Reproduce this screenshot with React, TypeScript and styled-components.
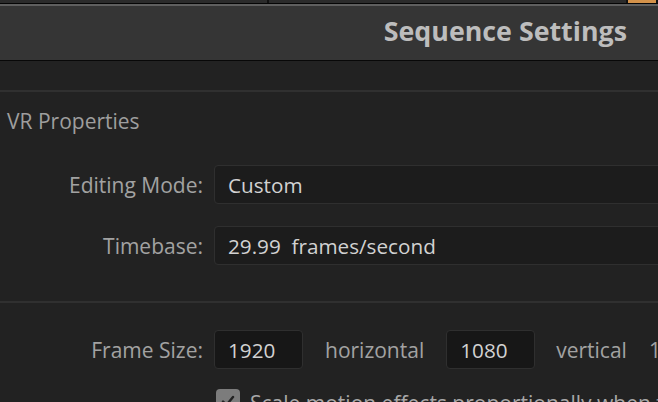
import React from "react";
import styled, { createGlobalStyle } from "styled-components";

const GlobalStyle = createGlobalStyle`
  html, body {
    margin: 0;
    padding: 0;
    background: #222222;
  }
  body {
    font-family: "Open Sans", "Noto Sans", Arial, sans-serif;
    -webkit-font-smoothing: antialiased;
  }
`;

const Screen = styled.div`
  width: 658px;
  height: 402px;
  overflow: hidden;
  display: flex;
  flex-direction: column;
  background: #222222;

  & > * {
    flex-shrink: 0;
  }
`;

const TabStrip = styled.div`
  display: flex;
  height: 3px;
  background: #2a2a2a;
  border-bottom: 1px solid #050505;
`;

const TabSegment = styled.div<{ $width?: number; $color?: string }>`
  flex: ${(p) => (p.$width ? `0 0 ${p.$width}px` : "1")};
  background: ${(p) => p.$color || "#2b2b2b"};
  border-right: 2px solid #111111;
`;

const TitleBar = styled.div`
  box-sizing: border-box;
  height: 57px;
  background: #353535;
  border-top: 2px solid #5f5f5f;
  border-bottom: 1px solid #080808;
  display: flex;
  align-items: center;
  justify-content: flex-end;
  padding: 0 31px 4px 0;
`;

const Title = styled.h1`
  margin: 0;
  font-size: 26.8px;
  line-height: 32px;
  font-weight: 700;
  color: #bdbdbd;
`;

const Body = styled.div`
  padding-top: 29px;
  display: flex;
  flex-direction: column;
`;

const Divider = styled.div`
  height: 2px;
  background: #303030;
  width: 100%;
`;

const Section = styled.section<{ $top: number; $bottom: number }>`
  padding-top: ${(p) => p.$top}px;
  padding-bottom: ${(p) => p.$bottom}px;
  display: flex;
  flex-direction: column;
`;

const SectionHeading = styled.div`
  padding-left: 7px;
  font-size: 21px;
  line-height: 26px;
  color: #9e9e9e;
  margin-bottom: 31px;
`;

const Rows = styled.div`
  display: flex;
  flex-direction: column;
  gap: 22px;
`;

const Row = styled.div`
  display: flex;
  align-items: center;
  white-space: nowrap;
`;

const Label = styled.span`
  flex: 0 0 203px;
  text-align: right;
  padding-right: 11px;
  font-size: 21px;
  color: #a2a2a2;
`;

const Field = styled.div<{ $width?: number }>`
  box-sizing: border-box;
  flex: 0 0 ${(p) => (p.$width ? `${p.$width}px` : "520px")};
  height: 39px;
  display: flex;
  align-items: center;
  padding-left: 13px;
  background: ${(p) => (p.$width ? "#171717" : "#1c1c1c")};
  border: 1.5px solid #2f2f2f;
  border-radius: 4px;
  font-size: 20.7px;
  color: #d2d2d2;
  white-space: pre;
`;

const Unit = styled.span<{ $left: number; $right: number }>`
  margin-left: ${(p) => p.$left}px;
  margin-right: ${(p) => p.$right}px;
  font-size: 21px;
  color: #a2a2a2;
`;

const CheckRow = styled.div`
  display: flex;
  align-items: flex-start;
  padding-left: 216px;
  margin-top: 20px;
  white-space: nowrap;
`;

const CheckBox = styled.span`
  flex: 0 0 24px;
  height: 24px;
  border-radius: 4px;
  background: #7c7c7c;
  display: flex;
  align-items: center;
  justify-content: center;
`;

const CheckText = styled.span`
  margin-left: 10px;
  font-size: 21px;
  line-height: 28px;
  color: #a8a8a8;
`;

const App: React.FC = () => {
  return (
    <>
      <GlobalStyle />
      <Screen>
        <TabStrip>
          <TabSegment $width={267} />
          <TabSegment />
          <TabSegment $width={28} $color="#d4924a" />
        </TabStrip>
        <TitleBar>
          <Title>Sequence Settings</Title>
        </TitleBar>
        <Body>
          <Divider />
          <Section $top={16} $bottom={36}>
            <SectionHeading>VR Properties</SectionHeading>
            <Rows>
              <Row>
                <Label>Editing Mode:</Label>
                <Field>Custom</Field>
              </Row>
              <Row>
                <Label>Timebase:</Label>
                <Field>29.99  frames/second</Field>
              </Row>
            </Rows>
          </Section>
          <Divider />
          <Section $top={27} $bottom={0}>
            <Row>
              <Label>Frame Size:</Label>
              <Field $width={89}>1920</Field>
              <Unit $left={22} $right={22}>horizontal</Unit>
              <Field $width={89}>1080</Field>
              <Unit $left={21} $right={22}>vertical</Unit>
              <Unit $left={0} $right={0}>16:9</Unit>
            </Row>
            <CheckRow>
              <CheckBox>
                <svg width="16" height="16" viewBox="0 0 16 16">
                  <path
                    d="M3 8.5 L6.5 12 L13 4"
                    fill="none"
                    stroke="#222"
                    strokeWidth="2.4"
                    strokeLinecap="round"
                    strokeLinejoin="round"
                  />
                </svg>
              </CheckBox>
              <CheckText>
                Scale motion effects proportionally when frame size changes
              </CheckText>
            </CheckRow>
          </Section>
        </Body>
      </Screen>
    </>
  );
};

export default App;
